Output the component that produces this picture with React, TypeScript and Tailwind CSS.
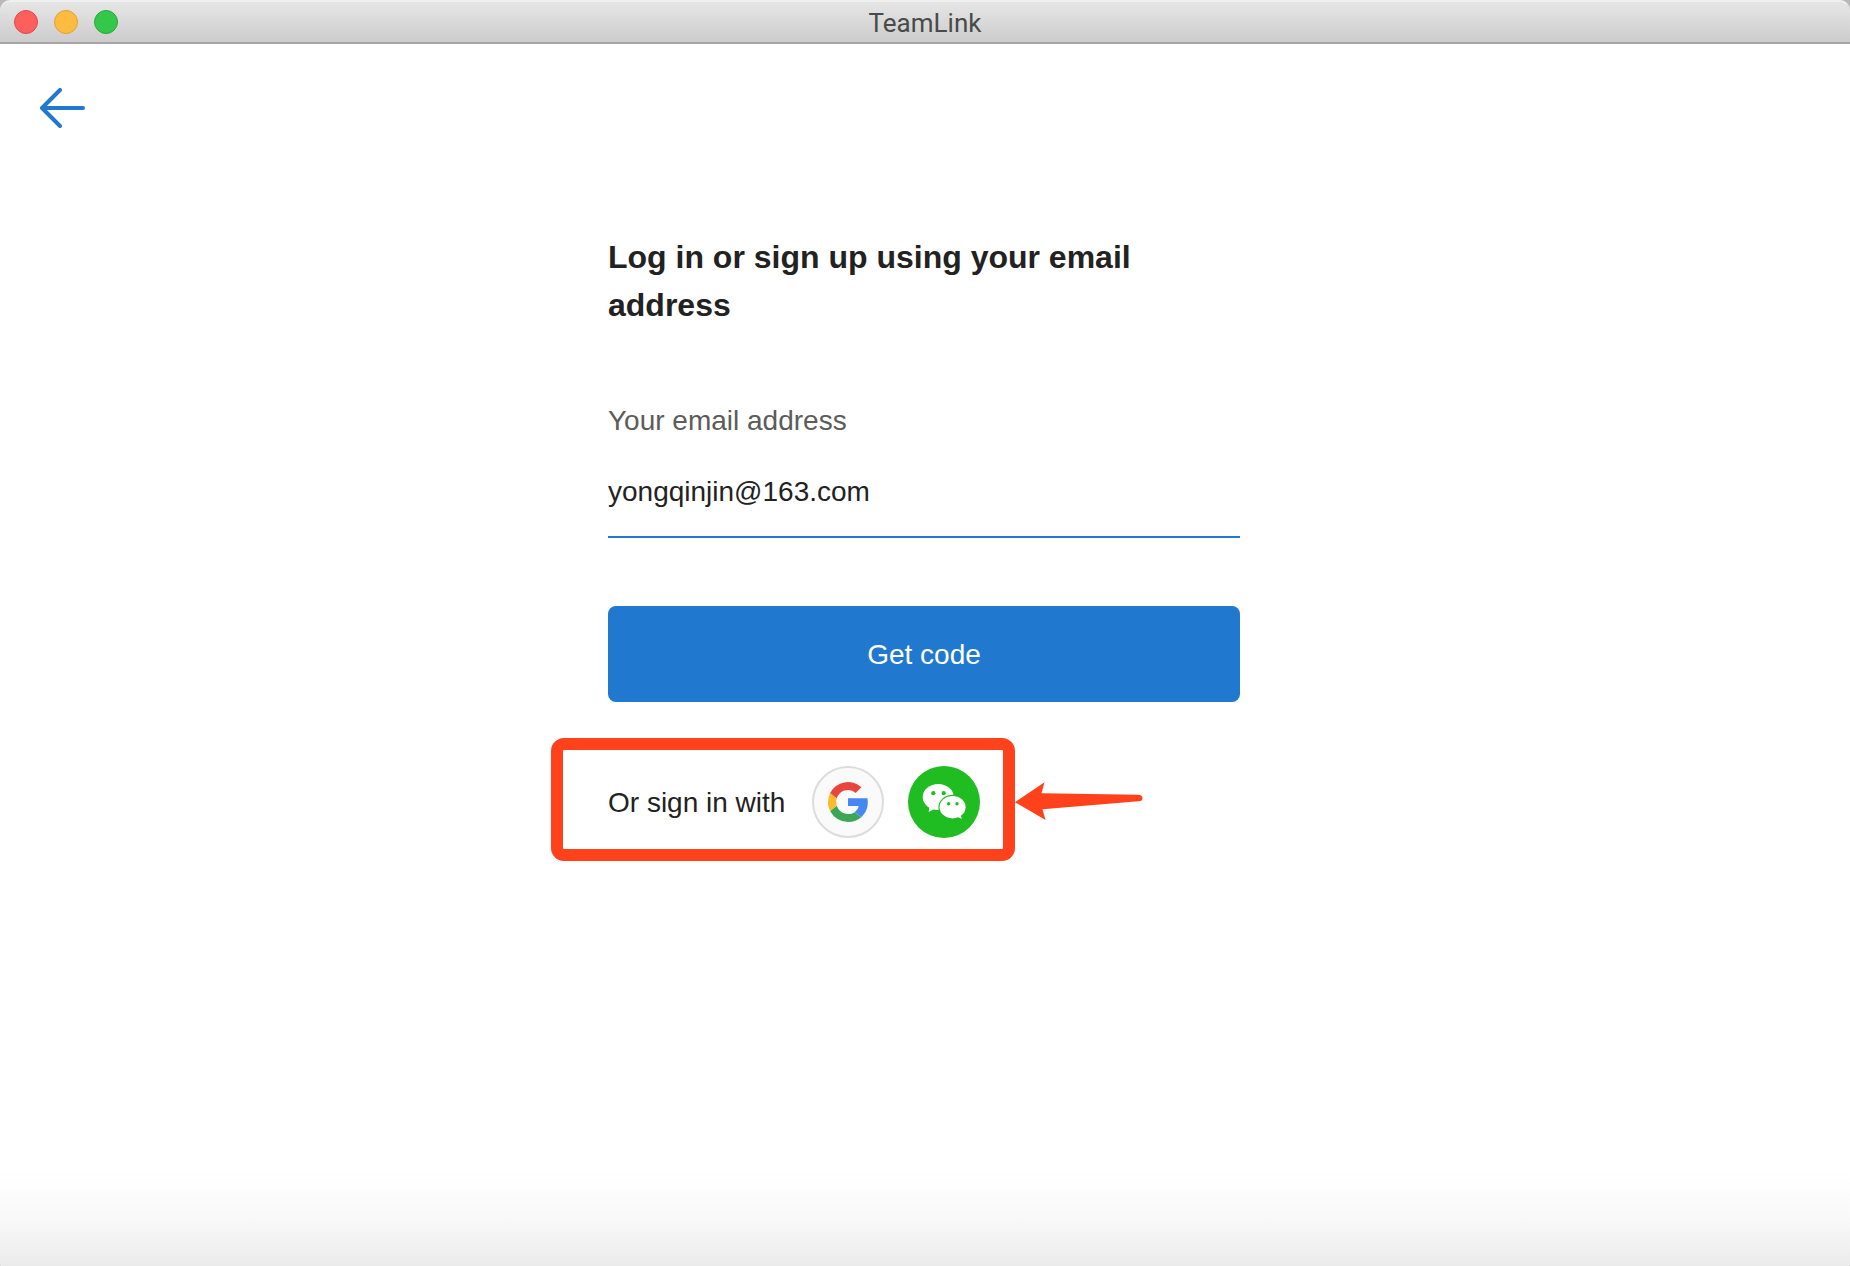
import { useState } from "react";

function GoogleLogo() {
  return (
    <svg viewBox="0 0 18 18" className="h-10 w-10" aria-hidden="true">
      <path fill="#4688f1" d="M17.74 7.36H9v3.48h4.84a4.14 4.14 0 0 1-1.8 2.72l2.92 2.26C16.66 14.25 17.9 12 17.9 9.2c0-.63-.06-1.25-.16-1.84Z" />
      <path fill="#3aa757" d="M9 18c2.43 0 4.47-.8 5.96-2.18l-2.92-2.26c-.8.54-1.84.86-3.04.86-2.34 0-4.33-1.58-5.04-3.71l-3 2.33A9 9 0 0 0 9 18Z" />
      <path fill="#fbbb2d" d="M3.96 10.71A5.41 5.41 0 0 1 3.68 9c0-.6.1-1.17.28-1.71l-3-2.33A9 9 0 0 0 0 9c0 1.45.35 2.83.96 4.04l3-2.33Z" />
      <path fill="#e8453c" d="M9 3.58c1.32 0 2.5.45 3.44 1.35l2.58-2.59A9 9 0 0 0 .96 4.96l3 2.33C4.67 5.16 6.66 3.58 9 3.58Z" />
    </svg>
  );
}

function WeChatLogo() {
  return (
    <svg viewBox="0 0 72 72" className="h-[72px] w-[72px]" aria-hidden="true">
      <ellipse cx="30.2" cy="31" rx="15.5" ry="13" fill="#fff" />
      <path fill="#fff" d="M21.8 39.5 20.6 46l6.4-3.2Z" />
      <ellipse cx="44.6" cy="41.2" rx="14.2" ry="12.4" fill="#1fbc22" />
      <ellipse cx="44.6" cy="41.2" rx="13" ry="11.2" fill="#fff" />
      <path fill="#fff" d="m52.3 47.5 1.5 5.6-5.4-2.8Z" />
      <g fill="#1fbc22">
        <circle cx="25.3" cy="27.2" r="2.1" />
        <circle cx="35.7" cy="27.2" r="2.1" />
        <circle cx="40.6" cy="37.7" r="1.7" />
        <circle cx="49" cy="37.7" r="1.7" />
      </g>
    </svg>
  );
}

function TitleBar({ title }: { title: string }) {
  return (
    <header className="grid h-11 grid-cols-[1fr_auto_1fr] items-center rounded-t-[10px] border-t-2 border-b-2 border-t-[#f0f0f0] border-b-[#a5a5a5] bg-linear-to-b from-[#e6e6e6] to-[#cccccc] px-3.5">
      <div className="flex gap-4">
        <button aria-label="Close" className="h-6 w-6 rounded-full border border-[#e2484b] bg-[#fc605c]" />
        <button aria-label="Minimize" className="h-6 w-6 rounded-full border border-[#e0a038] bg-[#fdbc40]" />
        <button aria-label="Zoom" className="h-6 w-6 rounded-full border border-[#27aa35] bg-[#34c84a]" />
      </div>
      <h1 className="pt-0.5 font-[Roboto,sans-serif] text-[26px] leading-8 text-[#4a4a4a]">{title}</h1>
    </header>
  );
}

export default function App() {
  const [email, setEmail] = useState("yongqinjin@163.com");

  return (
    <div className="bg-[#b8b8b8] font-['Liberation_Sans',Arial,sans-serif] text-[#222222]">
      <div className="flex min-h-screen flex-col">
        <TitleBar title="TeamLink" />

        <main className="flex flex-1 flex-col rounded-b-xs bg-white">
          <nav className="px-10 pt-11">
            <button aria-label="Back" className="block">
              <svg viewBox="0 0 46 40" className="h-10 w-[46px]" fill="none" stroke="#2178cf" strokeWidth="4" strokeLinecap="round" strokeLinejoin="round">
                <path d="M20 2 2 20l18 18M2 20h41" />
              </svg>
            </button>
          </nav>

          <div className="pt-[105px] pr-0.5">
            <form className="mx-auto w-full max-w-[632px]" onSubmit={(e) => e.preventDefault()}>
              <h2 className="text-[32px] leading-[48px] font-bold">Log in or sign up using your email address</h2>

              <label htmlFor="email" className="mt-[72px] block text-[28px] leading-10 text-[#5c5c5c]">
                Your email address
              </label>
              <input
                id="email"
                type="email"
                value={email}
                onChange={(e) => setEmail(e.target.value)}
                className="mt-4 block h-[81px] w-full border-b-2 border-[#2178cf] pb-2.5 text-[28px] outline-none"
              />

              <button type="submit" className="mt-[68px] block h-24 w-full rounded-lg bg-[#2178cf] pt-0.5 text-[28px] text-white">
                Get code
              </button>

              {/* Other sign-in options, highlighted */}
              <div className="-ml-[57px] mt-9 flex items-center">
                <div className="flex shrink-0 items-center rounded-[13px] border-12 border-[#ff421c] pt-4 pr-[23px] pb-[11px] pl-[45px]">
                  <span className="w-[204px] pt-0.5 text-[28px] leading-10">Or sign in with</span>
                  <div className="flex gap-6">
                    <button type="button" aria-label="Google" className="flex h-[72px] w-[72px] items-center justify-center rounded-full border-2 border-[#dcdcdc] bg-[#fafafa]">
                      <GoogleLogo />
                    </button>
                    <button type="button" aria-label="WeChat" className="h-[72px] w-[72px] rounded-full bg-[#1fbc22]">
                      <WeChatLogo />
                    </button>
                  </div>
                </div>
                <svg viewBox="0 0 128 40" className="h-10 w-32 shrink-0" aria-hidden="true">
                  <path fill="#ff421c" d="M0 22.2 29.5 2.2 26.5 13.2 123 14.8Q127.5 15 127.5 18.200T123.500 21.200L27.500 29.300 30.500 40Z" />
                </svg>
              </div>
            </form>
          </div>

          <div className="mt-auto h-24 rounded-b-xs bg-linear-to-b from-white via-[#f9f9f9] to-[#ebebeb]" />
        </main>
      </div>
    </div>
  );
}
